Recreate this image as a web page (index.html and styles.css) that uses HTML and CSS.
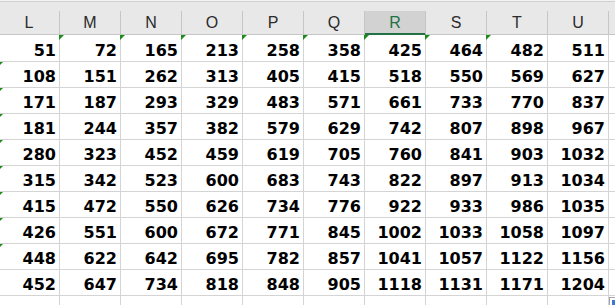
FILE: index.html
```html
<!DOCTYPE html>
<html lang="en">
<head>
    <meta charset="UTF-8">
    <title>Sheet1</title>
    <link rel="stylesheet" href="styles.css">
</head>
<body>
    <div class="sheet">
        <!-- column letters -->
        <div class="col-head">
            <div class="head-cell">L</div>
            <div class="head-cell">M</div>
            <div class="head-cell">N</div>
            <div class="head-cell">O</div>
            <div class="head-cell">P</div>
            <div class="head-cell">Q</div>
            <div class="head-cell is-active">R</div>
            <div class="head-cell">S</div>
            <div class="head-cell">T</div>
            <div class="head-cell">U</div>
            <div class="head-cell"></div>
        </div>

        <!-- cells -->
        <div class="rows">
            <div class="cell">51</div><div class="cell flag">72</div><div class="cell flag">165</div><div class="cell flag">213</div><div class="cell flag">258</div><div class="cell flag">358</div><div class="cell flag">425</div><div class="cell flag">464</div><div class="cell flag">482</div><div class="cell">511</div><div class="cell"></div>
            <div class="cell flag">108</div><div class="cell">151</div><div class="cell">262</div><div class="cell">313</div><div class="cell">405</div><div class="cell">415</div><div class="cell">518</div><div class="cell">550</div><div class="cell">569</div><div class="cell">627</div><div class="cell"></div>
            <div class="cell flag">171</div><div class="cell">187</div><div class="cell">293</div><div class="cell">329</div><div class="cell">483</div><div class="cell">571</div><div class="cell">661</div><div class="cell">733</div><div class="cell">770</div><div class="cell">837</div><div class="cell"></div>
            <div class="cell flag">181</div><div class="cell">244</div><div class="cell">357</div><div class="cell">382</div><div class="cell">579</div><div class="cell">629</div><div class="cell">742</div><div class="cell">807</div><div class="cell">898</div><div class="cell">967</div><div class="cell"></div>
            <div class="cell flag">280</div><div class="cell">323</div><div class="cell">452</div><div class="cell">459</div><div class="cell">619</div><div class="cell">705</div><div class="cell">760</div><div class="cell">841</div><div class="cell">903</div><div class="cell">1032</div><div class="cell"></div>
            <div class="cell flag">315</div><div class="cell">342</div><div class="cell">523</div><div class="cell">600</div><div class="cell">683</div><div class="cell">743</div><div class="cell">822</div><div class="cell">897</div><div class="cell">913</div><div class="cell">1034</div><div class="cell"></div>
            <div class="cell flag">415</div><div class="cell">472</div><div class="cell">550</div><div class="cell">626</div><div class="cell">734</div><div class="cell">776</div><div class="cell">922</div><div class="cell">933</div><div class="cell">986</div><div class="cell">1035</div><div class="cell"></div>
            <div class="cell flag">426</div><div class="cell">551</div><div class="cell">600</div><div class="cell">672</div><div class="cell">771</div><div class="cell">845</div><div class="cell">1002</div><div class="cell">1033</div><div class="cell">1058</div><div class="cell">1097</div><div class="cell"></div>
            <div class="cell flag">448</div><div class="cell">622</div><div class="cell">642</div><div class="cell">695</div><div class="cell">782</div><div class="cell">857</div><div class="cell">1041</div><div class="cell">1057</div><div class="cell">1122</div><div class="cell">1156</div><div class="cell"></div>
            <div class="cell">452</div><div class="cell">647</div><div class="cell">734</div><div class="cell">818</div><div class="cell">848</div><div class="cell">905</div><div class="cell">1118</div><div class="cell">1131</div><div class="cell">1171</div><div class="cell">1204</div><div class="cell"></div>
            <div class="cell"></div><div class="cell"></div><div class="cell"></div><div class="cell"></div><div class="cell"></div><div class="cell"></div><div class="cell"></div><div class="cell"></div><div class="cell"></div><div class="cell"></div><div class="cell"></div>
        </div>
    </div>

    <span class="quick-fill"></span>
</body>
</html>
```

FILE: styles.css
```css
:root {
    --grid-line: #d4d4d4;
    --head-bg: #e8e8e8;
    --head-line: #c6c6c6;
    --excel-green: #217346;
    --flag-green: #1b8c1b;
}

body {
    margin: 0;
    background: #fff;
    overflow: hidden;
}

.sheet {
    margin-left: -1px;
    width: max-content;
    border-top: 1px solid #f3f3f3;
}

/* Column header */
.col-head {
    display: grid;
    grid-template-columns: repeat(11, 61px);
    background: var(--head-bg);
    border-top: 1px solid #d0d0d0;
    padding-top: 9px;
}

.head-cell {
    height: 23px;
    padding-top: 1px;
    border-right: 1px solid var(--head-line);
    border-bottom: 1px solid var(--head-line);
    font-family: "Liberation Sans", Arial, sans-serif;
    font-size: 16px;
    line-height: 22px;
    color: #2b2b2b;
    text-align: center;
    box-sizing: border-box;
    height: 24px;
}

.head-cell.is-active {
    background: #d2d2d2;
    color: var(--excel-green);
    border-bottom-color: var(--excel-green);
    box-shadow: inset 0 -1px 0 var(--excel-green);
}

/* Data cells */
.rows {
    display: grid;
    grid-template-columns: repeat(11, 61px);
    grid-template-rows: 27px repeat(10, 26px);
}

.cell {
    position: relative;
    display: flex;
    align-items: flex-end;
    justify-content: flex-end;
    padding: 0 3px 1px 0;
    border-right: 1px solid var(--grid-line);
    border-bottom: 1px solid var(--grid-line);
    font-family: "DejaVu Sans", Verdana, sans-serif;
    font-weight: bold;
    font-size: 16px;
    line-height: 19px;
    color: #000;
}

/* number-stored-as-text marker */
.cell.flag::before {
    content: '';
    position: absolute;
    top: 0;
    left: -1px;
    border-style: solid;
    border-width: 5px 5px 0 0;
    border-color: var(--flag-green) transparent transparent transparent;
}

.quick-fill {
    position: absolute;
    left: 609px;
    top: 297px;
    width: 10px;
    height: 10px;
    box-sizing: border-box;
    border: 1px solid #a6a6a6;
    background: #fff;
}

.quick-fill::after {
    content: '';
    position: absolute;
    left: 2px;
    top: 2px;
    width: 6px;
    height: 6px;
    background: #3c78d8;
}
```
